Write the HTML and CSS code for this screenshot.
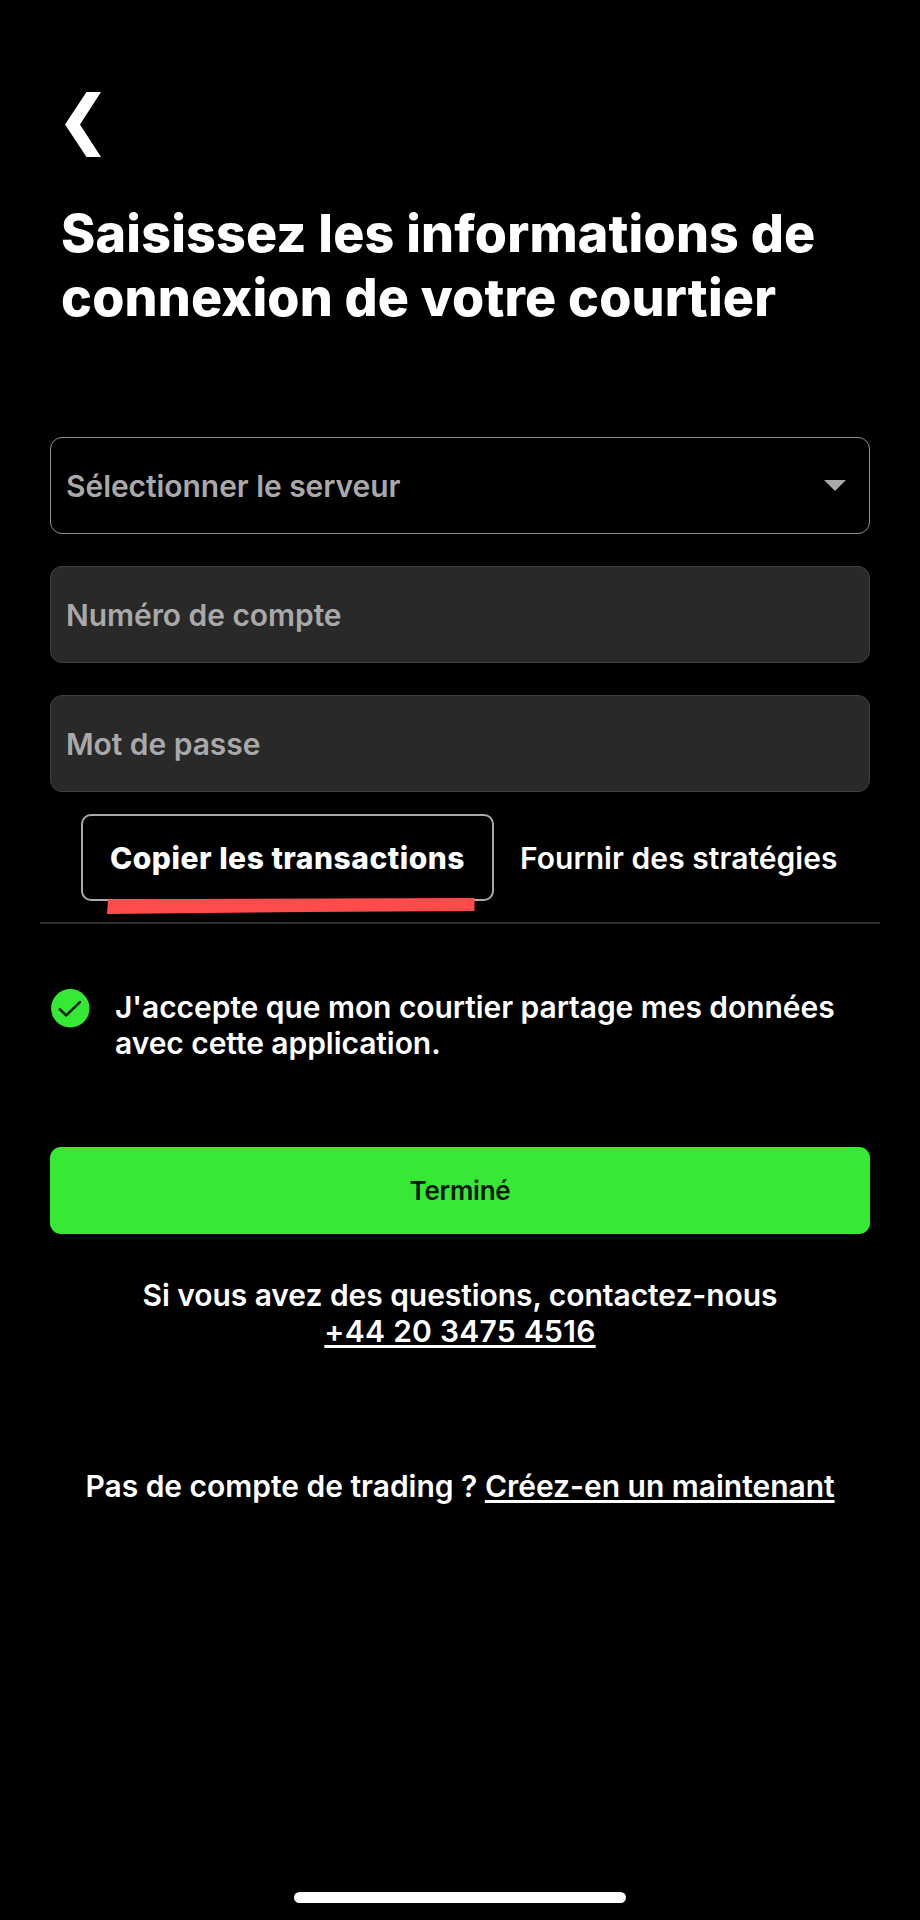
FILE: index.html
```html
<!DOCTYPE html>
<html lang="fr">
<head>
  <meta charset="UTF-8">
  <meta name="viewport" content="width=device-width, initial-scale=1.0">
  <title>Connexion courtier</title>
  <link rel="stylesheet" href="styles.css">
</head>
<body>
  <header>
    <a class="back" href="#" aria-label="Retour">
      <svg width="36" height="65" viewBox="0 0 36 65"><path d="M21.5 0H36L15 32.5L36 65H21.5L0 32.5Z" fill="#fff"/></svg>
    </a>
    <h1>Saisissez les informations de<br>connexion de votre courtier</h1>
  </header>

  <main>
    <div class="field select">
      <span>Sélectionner le serveur</span>
      <svg width="22" height="11" viewBox="0 0 22 11"><path d="M0 0H22L11 11Z" fill="#a9a9a9"/></svg>
    </div>
    <input class="field" type="text" placeholder="Numéro de compte">
    <input class="field" type="password" placeholder="Mot de passe">

    <div class="tabs">
      <button class="tab active">
        <span>Copier les transactions</span>
        <svg class="marker" width="368" height="16" viewBox="0 0 368 16"><path d="M1 1.3L367.5 0V13L200 14L0 16Z" fill="#ff4b4b"/></svg>
      </button>
      <button class="tab">Fournir des stratégies</button>
    </div>

    <div class="consent">
      <svg class="check" width="39" height="39" viewBox="0 0 39 39">
        <circle cx="19.3" cy="19.3" r="19.2" fill="#35e935"/>
        <path d="M8.8 20.2L15.2 26.4L29 13.1" fill="none" stroke="#061d06" stroke-width="2.6" stroke-linecap="round" stroke-linejoin="round"/>
      </svg>
      <p>J'accepte que mon courtier partage mes données<br>avec cette application.</p>
    </div>

    <button class="submit">Terminé</button>

    <p class="contact">Si vous avez des questions, contactez-nous<br><a class="phone" href="#">+44 20 3475 4516</a></p>
    <p class="signup">Pas de compte de trading ? <a href="#">Créez-en un maintenant</a></p>
  </main>

  <div class="home-bar"></div>
</body>
</html>
```
FILE: styles.css
```css
:root {
  --green: #35e935;
  --field: #292929;
  --muted: #a9a9a9;
}

* {
  box-sizing: border-box;
}

body {
  display: flex;
  flex-direction: column;
  height: 1920px;
  margin: 0;
  padding: 92px 40px 17px;
  background-color: #000;
  color: #fff;
  font-family: Inter, sans-serif;
  font-size: 30px;
  font-weight: 600;
  line-height: 36px;
  letter-spacing: -0.06px;
}

h1, p {
  margin: 0;
}

a {
  color: inherit;
  text-decoration-thickness: 3px;
  text-underline-offset: 3px;
  text-decoration-skip-ink: none;
}

button, input {
  font: inherit;
  letter-spacing: inherit;
  color: inherit;
}

header {
  padding-left: 21px;
}

.back {
  display: block;
  height: 65px;
  padding-left: 4px;
}

.back svg {
  display: block;
}

h1 {
  margin-top: 45px;
  font-size: 52px;
  font-weight: 800;
  line-height: 64px;
  letter-spacing: 0.18px;
}

main {
  display: flex;
  flex-direction: column;
  margin-top: 107px;
}

.field {
  height: 97px;
  margin: 0 10px 32px;
  padding: 0 15px;
  border: 1px solid #404040;
  border-radius: 12px;
  background-color: var(--field);
  color: var(--muted);
  outline: none;
}

.field::placeholder {
  color: var(--muted);
  opacity: 1;
}

.select {
  display: flex;
  align-items: center;
  justify-content: space-between;
  padding-right: 23px;
  border-color: #8d8d8d;
  background-color: transparent;
}

.tabs {
  display: flex;
  align-items: flex-start;
  height: 110px;
  margin-top: -10px;
  padding-left: 41px;
  border-bottom: 2px solid #2b2b2b;
}

.tab {
  height: 87px;
  padding: 0 26px;
  border: none;
  border-radius: 10px;
  background: none;
  letter-spacing: 0.05px;
  white-space: nowrap;
}

.tab.active {
  position: relative;
  width: 413px;
  padding: 0;
  border: 2px solid #aaa;
  font-weight: 800;
  letter-spacing: 0.5px;
}

/* red stroke drawn over the bottom edge of the active tab */
.marker {
  position: absolute;
  left: 24px;
  bottom: -15px;
}

.consent {
  display: flex;
  gap: 25px;
  margin-top: 65px;
  padding-left: 11px;
}

.check {
  flex: none;
}

.submit {
  height: 87px;
  margin: 86px 10px 0;
  border: none;
  border-radius: 11px;
  background-color: var(--green);
  color: #031603;
  font-size: 26px;
  letter-spacing: -0.25px;
}

.contact {
  margin-top: 43px;
  text-align: center;
}

.phone {
  letter-spacing: 0.27px;
}

.signup {
  margin-top: 119px;
  text-align: center;
  letter-spacing: -0.02px;
}

.home-bar {
  width: 332px;
  height: 11px;
  margin: auto auto 0;
  border-radius: 6px;
  background-color: #fff;
}
```
